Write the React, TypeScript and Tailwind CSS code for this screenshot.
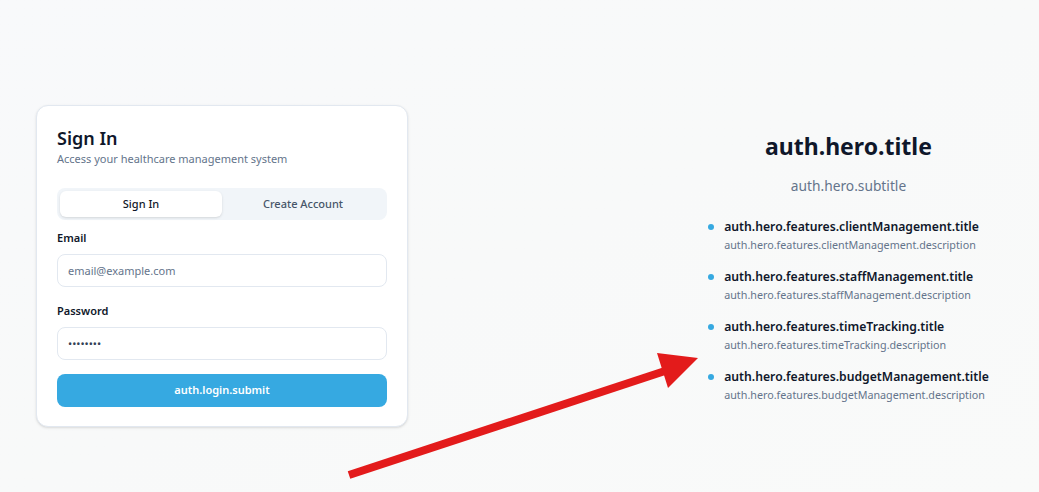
const features = [
  "clientManagement",
  "staffManagement",
  "timeTracking",
  "budgetManagement",
];

export default function App() {
  return (
    <div
      className="relative min-h-screen w-full overflow-hidden bg-linear-to-br from-[#f8f9fb] via-[#f8f9f9] to-[#f9faf9] text-[#0f172a]"
      style={{ fontFamily: '"Noto Sans", "Open Sans", sans-serif' }}
    >
      <div className="flex h-[492px] items-center pl-9 pt-[40px]">
        {/* login card */}
        <div className="w-[372px] rounded-xl border border-[#e2e8f0] bg-white px-5 pb-[19px] pt-[19px] shadow-sm">
          <h2 className="text-[18px] font-semibold leading-[26px] text-[#0f172a]">Sign In</h2>
          <p className="text-[11px] leading-[16px] text-[#64748b]">
            Access your healthcare management system
          </p>

          <div className="mt-[21px] grid grid-cols-2 rounded-lg bg-[#f1f5f9] p-[3px]">
            <button className="h-[26px] rounded-md bg-white text-[11px] font-medium text-[#0f172a] shadow-sm">
              Sign In
            </button>
            <button className="h-[26px] rounded-md text-[11px] font-medium text-[#475569]">
              Create Account
            </button>
          </div>

          <div className="mt-[9px]">
            <label className="block text-[11px] font-semibold leading-[18px] text-[#0f172a]">Email</label>
            <input
              type="text"
              placeholder="email@example.com"
              className="mt-[7px] h-[33px] w-full rounded-lg border border-[#e2e8f0] bg-white px-[10px] text-[11px] outline-none placeholder:text-[#64748b]"
            />
          </div>

          <div className="mt-[15px]">
            <label className="block text-[11px] font-semibold leading-[18px] text-[#0f172a]">Password</label>
            <input
              type="password"
              defaultValue="password"
              className="mt-[7px] h-[33px] w-full rounded-lg border border-[#e2e8f0] bg-white px-[10px] text-[11px] text-[#334155] outline-none"
            />
          </div>

          <button className="mt-[14px] h-[33px] w-full rounded-lg bg-[#36a9e1] text-[11px] font-semibold text-white">
            auth.login.submit
          </button>
        </div>

        {/* hero */}
        <div className="flex flex-1 justify-center pl-[250px] pt-[2px]">
          <div className="flex flex-col items-center">
            <h1 className="text-[23px] font-bold leading-[32px] text-[#0f172a]">auth.hero.title</h1>
            <p className="mt-[14px] text-[13.75px] leading-[20px] text-[#64748b]">auth.hero.subtitle</p>

            <ul className="mt-[22px] flex flex-col gap-[14px]">
              {features.map((f) => (
                <li key={f} className="flex gap-[10px]">
                  <span className="mt-[6px] h-[6px] w-[6px] shrink-0 rounded-full bg-[#36a9e1]" />
                  <div>
                    <p className="text-[12.2px] font-semibold leading-[18px] text-[#0f172a]">
                      auth.hero.features.{f}.title
                    </p>
                    <p className="text-[10.75px] leading-[18px] text-[#64748b]">
                      auth.hero.features.{f}.description
                    </p>
                  </div>
                </li>
              ))}
            </ul>
          </div>
        </div>
      </div>

      {/* annotation arrow */}
      <svg
        className="pointer-events-none absolute left-0 top-0"
        width="1039"
        height="492"
        viewBox="0 0 1039 492"
      >
        <line x1="349" y1="475" x2="668" y2="370" stroke="#e31b1b" strokeWidth="8" />
        <polygon points="657,353 698,358 668,388" fill="#e31b1b" />
      </svg>
    </div>
  );
}
